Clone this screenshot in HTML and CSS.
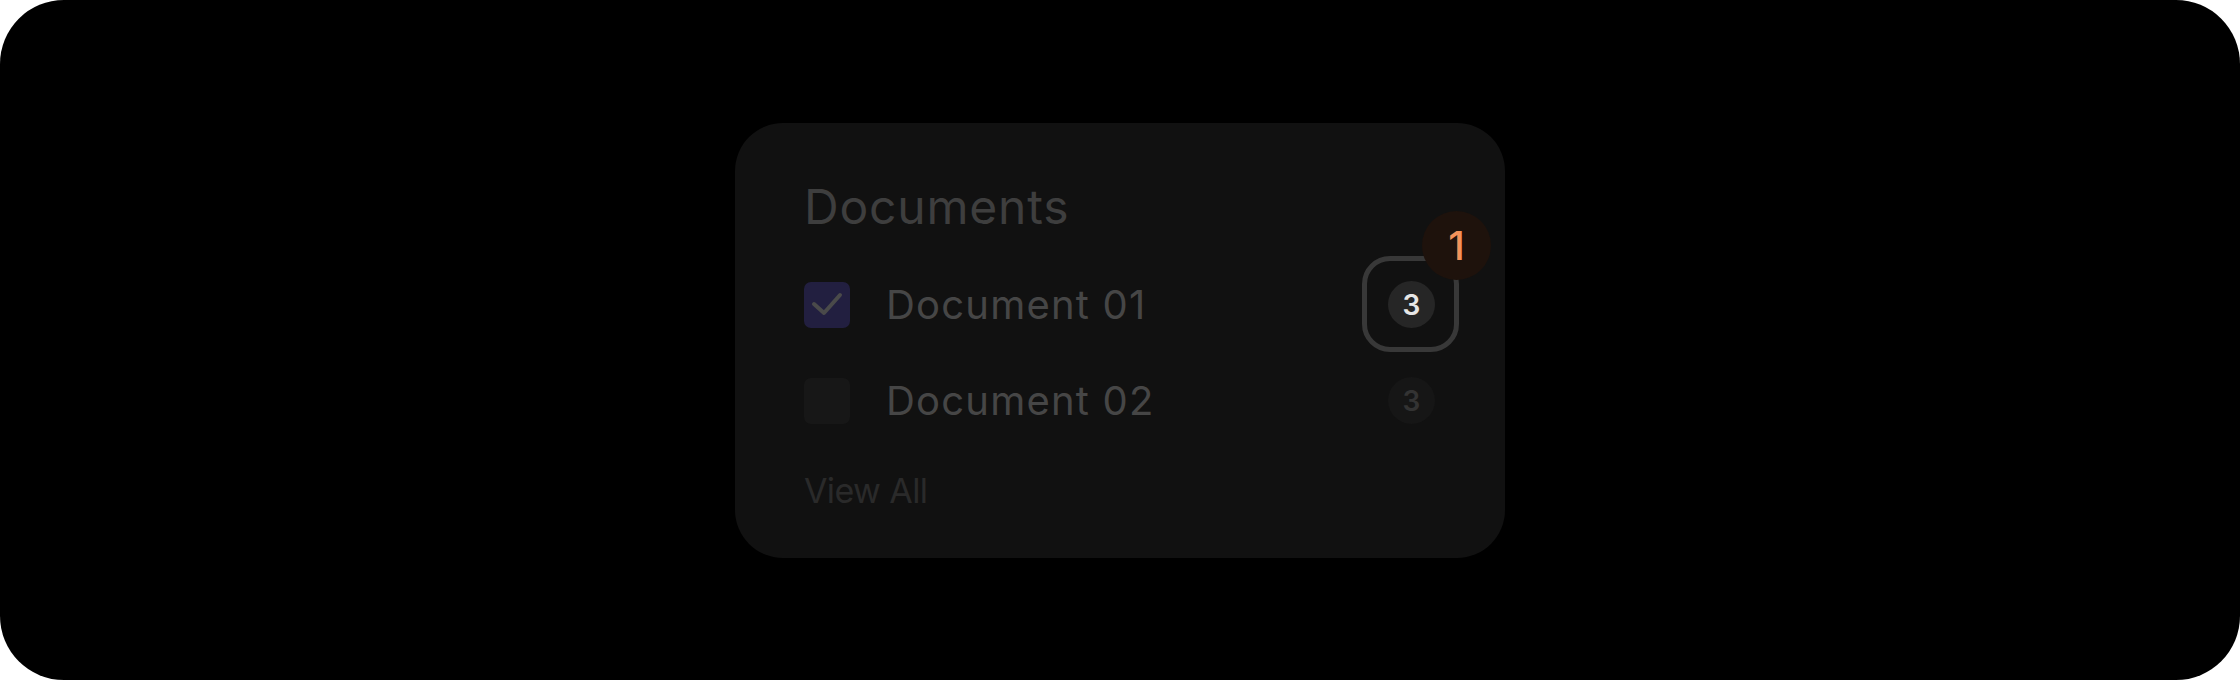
FILE: index.html
```html
<!DOCTYPE html>
<html lang="en">
<head>
<meta charset="utf-8">
<title>Documents</title>
<link rel="stylesheet" href="styles.css">
</head>
<body>
<div class="frame">
  <div class="card">
    <h2 class="title">Documents</h2>
    <ul class="list">
      <li class="row">
        <span class="check checked">
          <svg width="46" height="46" viewBox="0 0 46 46"><path d="M10 22 L20 31 L36 13" fill="none" stroke="#4a4a4a" stroke-width="4" stroke-linecap="round" stroke-linejoin="round"/></svg>
        </span>
        <span class="name">Document 01</span>
        <span class="count active">3
          <span class="highlight"></span>
          <span class="step">1</span>
        </span>
      </li>
      <li class="row">
        <span class="check"></span>
        <span class="name">Document 02</span>
        <span class="count">3</span>
      </li>
    </ul>
    <a class="view-all">View All</a>
  </div>
</div>
</body>
</html>
```

FILE: styles.css
```css
html, body {
  margin: 0;
  padding: 0;
  background: #ffffff;
}
body {
  font-family: Inter, "Open Sans", "Liberation Sans", sans-serif;
}
.frame {
  width: 2240px;
  height: 680px;
  background: #000000;
  border-radius: 64px;
  display: flex;
  align-items: center;
  justify-content: center;
}
.card {
  width: 770px;
  box-sizing: border-box;
  background: #111111;
  border-radius: 48px;
  padding: 52px 70px 47px 69px;
  display: flex;
  flex-direction: column;
}
.title {
  margin: 0;
  font-size: 48px;
  line-height: 64px;
  font-weight: 400;
  color: #3e3e3e;
  letter-spacing: 0.8px;
}
.list {
  list-style: none;
  margin: 18px 0 0;
  padding: 0;
}
.row {
  height: 96px;
  display: flex;
  align-items: center;
}
.check {
  width: 46px;
  height: 46px;
  border-radius: 7px;
  background: #171717;
  flex: none;
  display: flex;
}
.check.checked {
  background: #221f40;
}
.name {
  margin-left: 36px;
  font-size: 40px;
  line-height: 48px;
  color: #464646;
  flex: 1;
  letter-spacing: 1.2px;
}
.count {
  position: relative;
  width: 47px;
  height: 47px;
  border-radius: 50%;
  background: #161616;
  color: #333333;
  font-size: 28px;
  font-weight: 600;
  display: flex;
  align-items: center;
  justify-content: center;
  flex: none;
}
.count.active {
  background: #262626;
  color: #e6e6e6;
}
.highlight {
  position: absolute;
  left: -26px;
  top: -25px;
  width: 97px;
  height: 96px;
  box-sizing: border-box;
  border: 5px solid #383838;
  border-radius: 28px;
}
.step {
  position: absolute;
  left: 34px;
  top: -70px;
  width: 69px;
  height: 69px;
  border-radius: 50%;
  background: #1e120c;
  color: #f3925a;
  font-size: 40px;
  font-weight: 500;
  display: flex;
  align-items: center;
  justify-content: center;
}
.view-all {
  margin-top: 22px;
  font-size: 34px;
  line-height: 40px;
  color: #2a2a2a;
  letter-spacing: -0.6px;
}
```
